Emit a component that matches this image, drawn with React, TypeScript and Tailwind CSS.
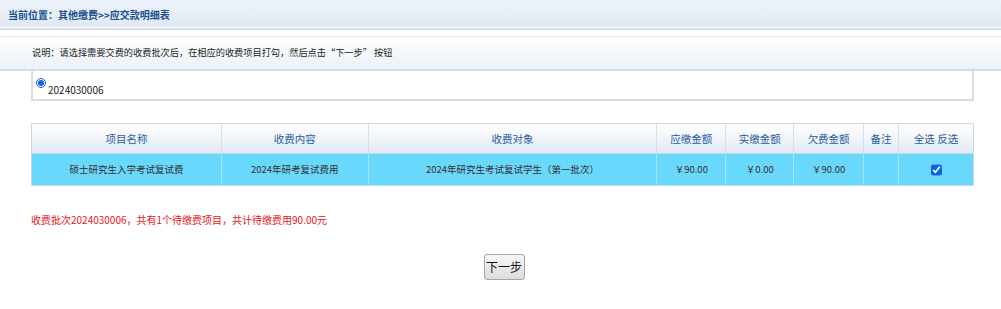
const font = { fontFamily: '"Noto Sans CJK SC", "Liberation Sans", sans-serif' }

const heads = [
  { label: "项目名称", w: "w-[189px]" },
  { label: "收费内容", w: "w-[147px]" },
  { label: "收费对象", w: "w-[289px]" },
  { label: "应缴金额", w: "w-[69px]" },
  { label: "实缴金额", w: "w-[68px]" },
  { label: "欠费金额", w: "w-[70px]" },
  { label: "备注", w: "w-[35px]" },
  { label: "全选 反选", w: "w-[75px]" },
]

const row = ["硕士研究生入学考试复试费", "2024年研考复试费用", "2024年研究生考试复试学生（第一批次）", "￥90.00", "￥0.00", "￥90.00", ""]

export default function App() {
  return (
    <div className="w-[1001px] h-[309px] bg-white text-[10px] text-[#333]" style={font}>
      {/* 当前位置 */}
      <div className="h-[28px] flex items-center pt-[1px] px-[8px] bg-gradient-to-b from-[#edf3fb] to-[#dfe8f4] border-b border-white">
        <span className="font-bold text-[#1d4f8e] text-[10px]">当前位置：其他缴费&gt;&gt;应交款明细表</span>
      </div>
      <div className="h-[2px] bg-[#d6e0ec]" />
      <div className="h-[6px]" />

      {/* 说明 */}
      <div className="h-[35px] flex items-center pl-[32px] border-t border-[#e2e9f2] border-b-2 border-b-[#d3deeb] bg-gradient-to-b from-white to-[#ebf1f9]">
        <span className="text-[9.2px] text-[#222]">说明：请选择需要交费的收费批次后，在相应的收费项目打勾，然后点击“下一步” 按钮</span>
      </div>

      {/* 批次 */}
      <div className="ml-[31px] w-[943px] h-[30px] border-2 border-t-0 border-[#d3deeb] flex items-start pl-[3px] gap-[2px]">
        <input type="radio" checked readOnly className="w-[10px] h-[10px] m-0 mt-[7px] accent-[#0a64e8]" />
        <span className="text-[10px] text-[#222] mt-[11px]">2024030006</span>
      </div>

      {/* 表格 */}
      <div className="ml-[31px] mt-[22px] w-[943px] border border-[#c9d8ea]">
        <div className="flex h-[30px] bg-gradient-to-b from-white to-[#e2eaf5] border-b border-[#c9d8ea]">
          {heads.map((h, i) => (
            <div
              key={h.label}
              className={`${h.w} flex items-center justify-center text-[10.5px] text-[#2a5b9c] ${i > 0 ? "border-l border-[#d3dfed]" : ""}`}
            >
              {h.label}
            </div>
          ))}
        </div>
        <div className="flex h-[31px] bg-[#68d9fc]">
          {heads.map((h, i) => (
            <div
              key={h.label}
              className={`${h.w} flex items-center justify-center text-[9.5px] text-[#3a2c2c] ${i > 0 ? "border-l border-[#a9e3f6]" : ""}`}
            >
              {i < 7 ? row[i] : (
                <input type="checkbox" checked readOnly className="w-[11px] h-[12px] m-0 accent-[#0a64e8]" />
              )}
            </div>
          ))}
        </div>
      </div>

      {/* 合计 */}
      <div className="ml-[31px] mt-[26px] text-[10px] text-[#e8141c]">
        收费批次2024030006，共有1个待缴费项目，共计待缴费用90.00元
      </div>

      {/* 下一步 */}
      <div className="flex justify-center mt-[27px] pl-[7px]">
        <button className="w-[41px] h-[26px] rounded-[3px] border border-[#a6a6a6] bg-gradient-to-b from-[#f7f7f7] to-[#dddddd] text-[12px] text-[#111]">
          下一步
        </button>
      </div>
    </div>
  )
}
